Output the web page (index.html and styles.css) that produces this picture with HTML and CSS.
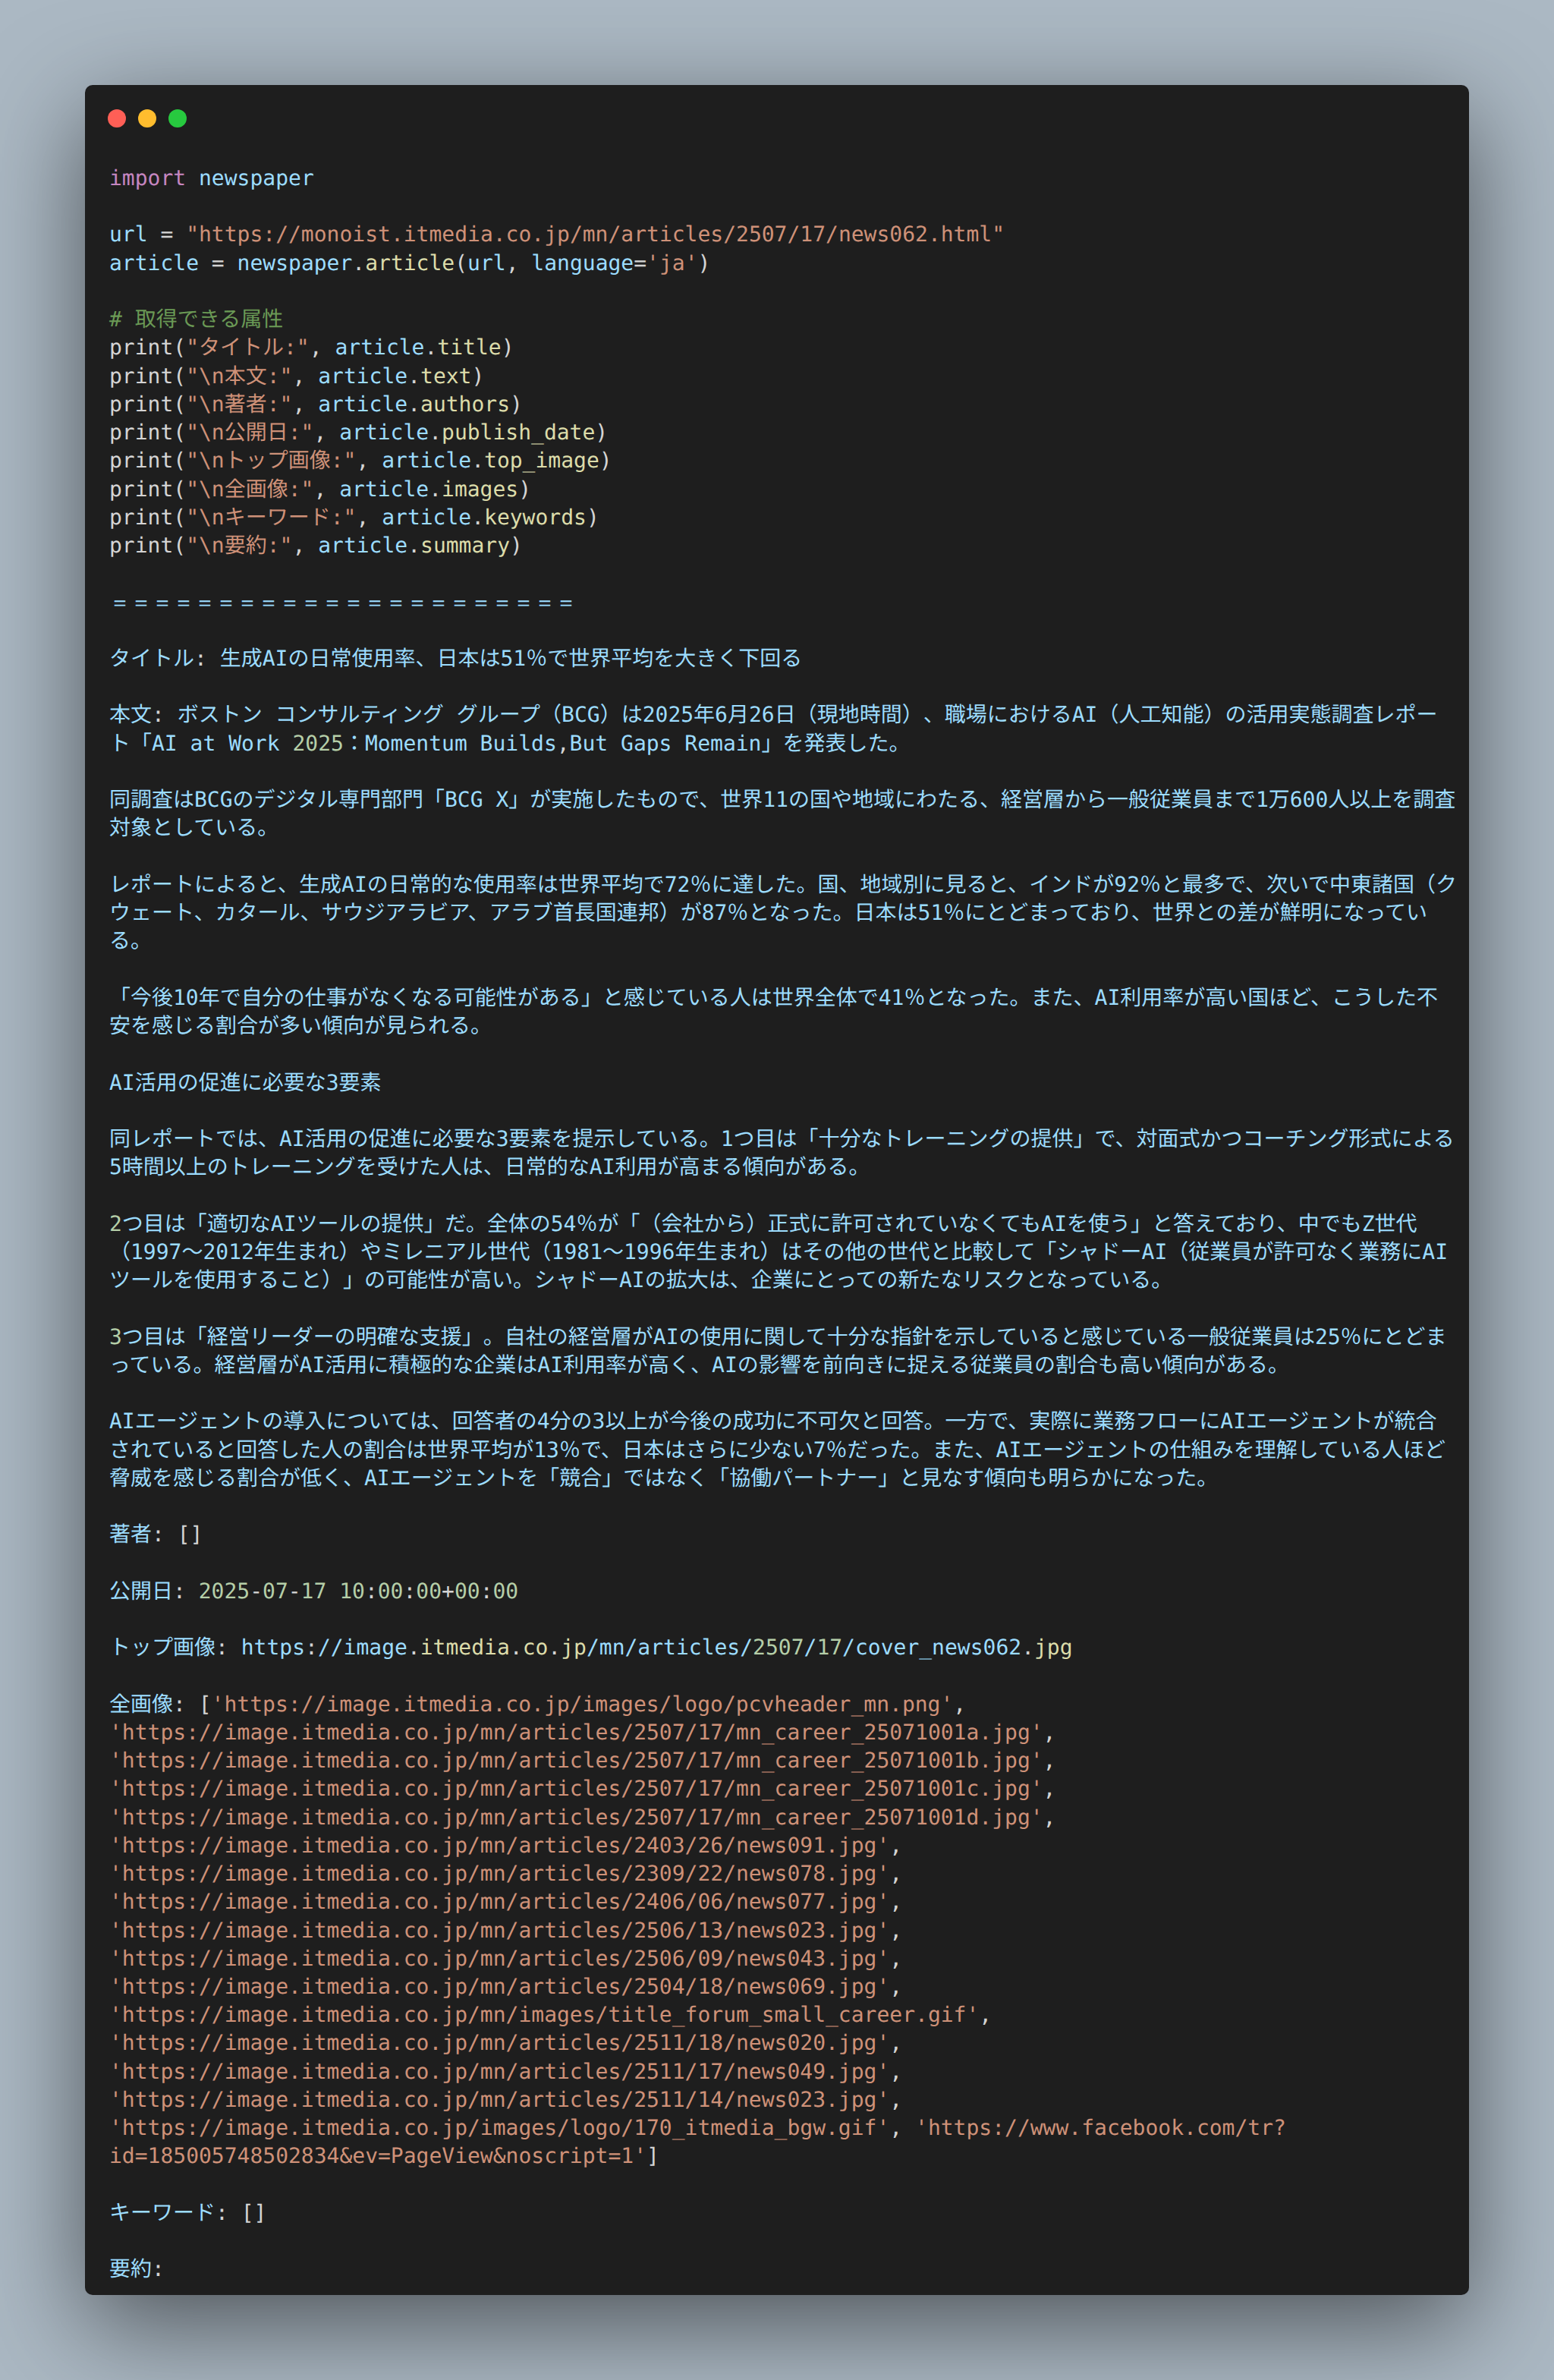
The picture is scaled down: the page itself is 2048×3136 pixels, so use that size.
FILE: index.html
```html
<!DOCTYPE html>
<html lang="ja">
<head>
<meta charset="utf-8">
<title>newspaper</title>
<link rel="stylesheet" href="styles.css">
</head>
<body>
<main class="window">
<div class="controls"><span class="dot red"></span><span class="dot yellow"></span><span class="dot green"></span></div>
<pre class="code"><span class="k">import</span> <span class="v">newspaper</span>

<span class="v">url</span> = <span class="s">"https://monoist.itmedia.co.jp/mn/articles/2507/17/news062.html"</span>
<span class="v">article</span> = <span class="v">newspaper</span>.<span class="f">article</span>(<span class="v">url</span>, <span class="v">language</span>=<span class="s">'ja'</span>)

<span class="c"># 取得できる属性</span>
print(<span class="s">"タイトル:"</span>, <span class="v">article</span>.<span class="f">title</span>)
print(<span class="s">"\n本文:"</span>, <span class="v">article</span>.<span class="f">text</span>)
print(<span class="s">"\n著者:"</span>, <span class="v">article</span>.<span class="f">authors</span>)
print(<span class="s">"\n公開日:"</span>, <span class="v">article</span>.<span class="f">publish_date</span>)
print(<span class="s">"\nトップ画像:"</span>, <span class="v">article</span>.<span class="f">top_image</span>)
print(<span class="s">"\n全画像:"</span>, <span class="v">article</span>.<span class="f">images</span>)
print(<span class="s">"\nキーワード:"</span>, <span class="v">article</span>.<span class="f">keywords</span>)
print(<span class="s">"\n要約:"</span>, <span class="v">article</span>.<span class="f">summary</span>)

<span class="v rule">＝＝＝＝＝＝＝＝＝＝＝＝＝＝＝＝＝＝＝＝＝＝</span>

<span class="v">タイトル</span>: <span class="v">生成AIの日常使用率、日本は51％で世界平均を大きく下回る</span>

<span class="v">本文</span>: <span class="v">ボストン コンサルティング グループ（BCG）は2025年6月26日（現地時間）、職場におけるAI（人工知能）の活用実態調査レポート「AI at Work </span><span class="n">2025</span><span class="v">：Momentum Builds</span>,<span class="v">But Gaps Remain」を発表した。</span>

<span class="v">同調査はBCGのデジタル専門部門「BCG X」が実施したもので、世界11の国や地域にわたる、経営層から一般従業員まで1万600人以上を調査対象としている。</span>

<span class="v">レポートによると、生成AIの日常的な使用率は世界平均で72％に達した。国、地域別に見ると、インドが92％と最多で、次いで中東諸国（クウェート、カタール、サウジアラビア、アラブ首長国連邦）が87％となった。日本は51％にとどまっており、世界との差が鮮明になっている。</span>

<span class="v">「今後10年で自分の仕事がなくなる可能性がある」と感じている人は世界全体で41％となった。また、AI利用率が高い国ほど、こうした不安を感じる割合が多い傾向が見られる。</span>

<span class="v">AI活用の促進に必要な3要素</span>

<span class="v">同レポートでは、AI活用の促進に必要な3要素を提示している。1つ目は「十分なトレーニングの提供」で、対面式かつコーチング形式による5時間以上のトレーニングを受けた人は、日常的なAI利用が高まる傾向がある。</span>

<span class="n">2</span><span class="v">つ目は「適切なAIツールの提供」だ。全体の54％が「（会社から）正式に許可されていなくてもAIを使う」と答えており、中でもZ世代（1997～2012年生まれ）やミレニアル世代（1981～1996年生まれ）はその他の世代と比較して「シャドーAI（従業員が許可なく業務にAIツールを使用すること）」の可能性が高い。シャドーAIの拡大は、企業にとっての新たなリスクとなっている。</span>

<span class="n">3</span><span class="v">つ目は「経営リーダーの明確な支援」。自社の経営層がAIの使用に関して十分な指針を示していると感じている一般従業員は25％にとどまっている。経営層がAI活用に積極的な企業はAI利用率が高く、AIの影響を前向きに捉える従業員の割合も高い傾向がある。</span>

<span class="v">AIエージェントの導入については、回答者の4分の3以上が今後の成功に不可欠と回答。一方で、実際に業務フローにAIエージェントが統合されていると回答した人の割合は世界平均が13％で、日本はさらに少ない7％だった。また、AIエージェントの仕組みを理解している人ほど脅威を感じる割合が低く、AIエージェントを「競合」ではなく「協働パートナー」と見なす傾向も明らかになった。</span>

<span class="v">著者</span>: []

<span class="v">公開日</span>: <span class="n">2025</span>-<span class="n">07</span>-<span class="n">17</span> <span class="n">10</span>:<span class="n">00</span>:<span class="n">00</span>+<span class="n">00</span>:<span class="n">00</span>

<span class="v">トップ画像</span>: <span class="v">https</span>:<span class="v">//image</span>.<span class="f">itmedia</span>.<span class="f">co</span>.<span class="f">jp</span><span class="v">/mn/articles/</span><span class="n">2507</span><span class="v">/</span><span class="n">17</span><span class="v">/cover_news062</span>.<span class="f">jpg</span>

<span class="v">全画像</span>: [<span class="s">'https://image.itmedia.co.jp/images/logo/pcvheader_mn.png'</span>,
<span class="s">'https://image.itmedia.co.jp/mn/articles/2507/17/mn_career_25071001a.jpg'</span>,
<span class="s">'https://image.itmedia.co.jp/mn/articles/2507/17/mn_career_25071001b.jpg'</span>,
<span class="s">'https://image.itmedia.co.jp/mn/articles/2507/17/mn_career_25071001c.jpg'</span>,
<span class="s">'https://image.itmedia.co.jp/mn/articles/2507/17/mn_career_25071001d.jpg'</span>,
<span class="s">'https://image.itmedia.co.jp/mn/articles/2403/26/news091.jpg'</span>,
<span class="s">'https://image.itmedia.co.jp/mn/articles/2309/22/news078.jpg'</span>,
<span class="s">'https://image.itmedia.co.jp/mn/articles/2406/06/news077.jpg'</span>,
<span class="s">'https://image.itmedia.co.jp/mn/articles/2506/13/news023.jpg'</span>,
<span class="s">'https://image.itmedia.co.jp/mn/articles/2506/09/news043.jpg'</span>,
<span class="s">'https://image.itmedia.co.jp/mn/articles/2504/18/news069.jpg'</span>,
<span class="s">'https://image.itmedia.co.jp/mn/images/title_forum_small_career.gif'</span>,
<span class="s">'https://image.itmedia.co.jp/mn/articles/2511/18/news020.jpg'</span>,
<span class="s">'https://image.itmedia.co.jp/mn/articles/2511/17/news049.jpg'</span>,
<span class="s">'https://image.itmedia.co.jp/mn/articles/2511/14/news023.jpg'</span>,
<span class="s">'https://image.itmedia.co.jp/images/logo/170_itmedia_bgw.gif'</span>, <span class="s">'https://www.facebook.com/tr?id=185005748502834&amp;ev=PageView&amp;noscript=1'</span>]

<span class="v">キーワード</span>: []

<span class="v">要約</span>:</pre>
</main>
</body>
</html>
```

FILE: styles.css
```css
html, body {
  margin: 0;
  padding: 0;
}

body {
  background: #abb8c3;
  padding: 112px;
}

.window {
  background: #1e1e1e;
  border-radius: 10px;
  box-shadow: 0 40px 136px rgba(0, 0, 0, 0.55);
  padding: 30px 15px 16px 32px;
  height: 2912px;
  box-sizing: border-box;
}

.controls {
  display: flex;
  gap: 16px;
  height: 28px;
  align-items: center;
  margin-left: -2px;
}

.dot {
  width: 24px;
  height: 24px;
  border-radius: 50%;
}

.red { background: #ff5f56; }
.yellow { background: #ffbd2e; }
.green { background: #27c93f; }

.code {
  margin: 46px 0 0;
  font-family: "DejaVu Sans Mono", "Noto Sans CJK JP", monospace;
  font-size: 28px;
  line-height: 1.33;
  color: #d4d4d4;
  white-space: pre-wrap;
  overflow-wrap: break-word;
  text-rendering: geometricPrecision;
  text-spacing-trim: space-all;
}

.rule {
  font-family: "DejaVu Sans Mono", monospace;
}

.k { color: #c586c0; }
.v { color: #9cdcfe; }
.s { color: #ce9178; }
.f { color: #dcdcaa; }
.c { color: #6a9955; }
.n { color: #b5cea8; }
```
